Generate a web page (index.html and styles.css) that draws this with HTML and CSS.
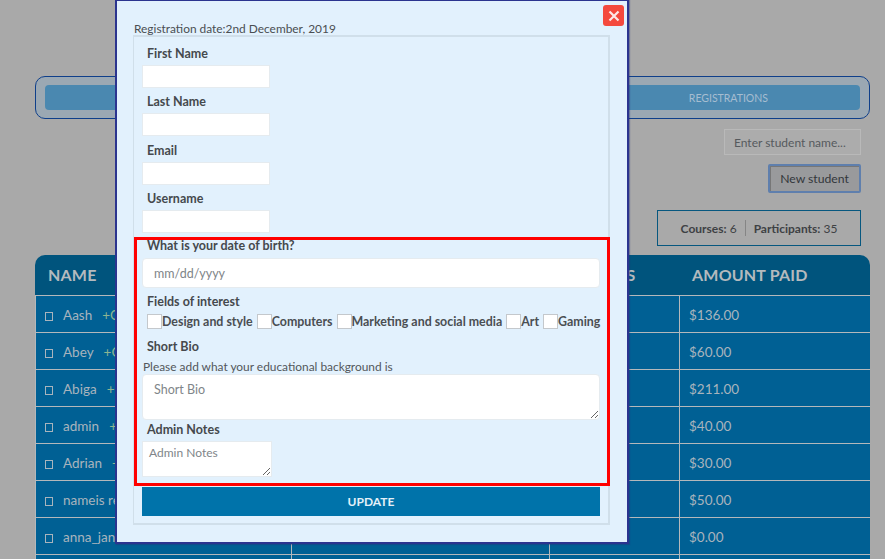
FILE: index.html
```html
<!DOCTYPE html>
<html lang="en">
<head>
<meta charset="utf-8">
<title>Registrations</title>
<link rel="stylesheet" href="styles.css">
</head>
<body>
<main class="page">
  <nav class="nav"><div class="nav-bar"><span class="nav-item">REGISTRATIONS</span></div></nav>
  <div class="tools">
    <input class="search" type="text" placeholder="Enter student name...">
    <button class="new-btn" type="button">New student</button>
    <div class="stats"><span><b>Courses:</b> 6</span><i class="stats-sep"></i><span><b>Participants:</b> 35</span></div>
  </div>
  <table class="grid">
    <thead>
      <tr><th class="c1">NAME</th><th class="c2">EMAIL</th><th class="c3">COURSES</th><th class="c4">AMOUNT PAID</th></tr>
    </thead>
    <tbody>
      <tr><td><span class="box"></span>Aash<span class="add">+Course</span></td><td></td><td></td><td>$136.00</td></tr>
      <tr><td><span class="box"></span>Abey<span class="add">+Course</span></td><td></td><td></td><td>$60.00</td></tr>
      <tr><td><span class="box"></span>Abiga<span class="add">+Course</span></td><td></td><td></td><td>$211.00</td></tr>
      <tr><td><span class="box"></span>admin<span class="add">+Course</span></td><td></td><td></td><td>$40.00</td></tr>
      <tr><td><span class="box"></span>Adrian<span class="add">+Course</span></td><td></td><td></td><td>$30.00</td></tr>
      <tr><td><span class="box"></span>nameis real</td><td></td><td></td><td>$50.00</td></tr>
      <tr><td><span class="box"></span>anna_jane</td><td></td><td></td><td>$0.00</td></tr>
      <tr class="tail"><td></td><td></td><td></td><td></td></tr>
    </tbody>
  </table>
</main>

<section class="modal">
  <button class="close" type="button" aria-label="Close">
    <svg viewBox="0 0 12 12" width="12" height="12"><path d="M1.5 1.5 10.5 10.5M10.5 1.5 1.5 10.5" stroke="#fde9e7" stroke-width="2.2" fill="none"/></svg>
  </button>
  <p class="reg-date">Registration date:2nd December, 2019</p>
  <form class="fieldset">
    <label class="lbl">First Name</label>
    <input class="short" type="text">
    <label class="lbl">Last Name</label>
    <input class="short" type="text">
    <label class="lbl">Email</label>
    <input class="short" type="text">
    <label class="lbl">Username</label>
    <input class="short" type="text">
    <label class="lbl lbl-dob">What is your date of birth?</label>
    <input class="date" type="text" placeholder="mm/dd/yyyy">
    <label class="lbl lbl-fields">Fields of interest</label>
    <div class="checks">
      <span class="check"><i></i>Design and style</span>
      <span class="check"><i></i>Computers</span>
      <span class="check"><i></i>Marketing and social media</span>
      <span class="check"><i></i>Art</span>
      <span class="check"><i></i>Gaming</span>
    </div>
    <label class="lbl lbl-bio">Short Bio</label>
    <p class="help">Please add what your educational background is</p>
    <textarea class="bio" placeholder="Short Bio"></textarea>
    <label class="lbl lbl-notes">Admin Notes</label>
    <textarea class="notes" placeholder="Admin Notes"></textarea>
    <button class="update" type="button">UPDATE</button>
    <div class="highlight"></div>
  </form>
</section>
</body>
</html>
```

FILE: styles.css
```css
* { box-sizing: border-box; }
html, body { margin: 0; height: 559px; overflow: hidden; }
body { background: #a9a9a9; font-family: Lato, "Liberation Sans", sans-serif; font-size: 13px; color: #3f4347; position: relative; }

.page { padding: 76px 15px 0 35px; }

.nav { height: 43px; border: 1px solid #0f3f8a; border-radius: 10px; background: #9ba8b3; padding: 8px 9px; }
.nav-bar { height: 25px; background: #4a88b0; border-radius: 4px; display: flex; justify-content: flex-end; align-items: center; padding-right: 92px; }
.nav-item { font-size: 10.5px; color: #a6bdd0; }

.tools { display: flex; flex-direction: column; align-items: flex-end; padding: 10px 9px 0 0; }
.search { width: 137px; height: 26px; border: 1px solid #b9b9b9; background: #acacac; padding: 0 9px; font: 12px Lato, sans-serif; }
.search::placeholder { color: #565a5e; opacity: 1; }
.new-btn { width: 93px; height: 29px; margin-top: 9px; background: #999a9c; border: 2px solid #5f7fad; border-radius: 2px; font: 12.2px Lato, sans-serif; color: #33373b; box-shadow: inset 1px 1px 0 #777; padding: 0; }
.stats { width: 204px; height: 36px; margin-top: 17px; border: 1px solid #07577f; display: flex; align-items: center; justify-content: center; gap: 8px; font-size: 12px; color: #3e4144; }
.stats b { font-weight: 700; }
.stats-sep { width: 1px; height: 16px; background: #858585; }

.grid { width: 835px; margin-top: 9px; border-collapse: separate; border-spacing: 0; table-layout: fixed; color: #a8b4bd; }
.grid th { height: 40px; background: #00547d; color: #b4babe; text-align: left; font-size: 16px; font-weight: 700; padding: 0 0 2px 13px; letter-spacing: .2px; }
.grid th:first-child { border-top-left-radius: 10px; }
.grid th:last-child { border-top-right-radius: 10px; }
.c1 { width: 256px; }
.c2 { width: 258px; }
.c3 { width: 130px; }
.grid td { height: 37px; background: #006094; border-top: 1px solid #b4b8bb; border-left: 1px solid #b4b8bb; padding: 2px 0 0 9px; font-size: 13.5px; white-space: nowrap; overflow: hidden; }
.grid .tail td { height: 5px; padding: 0; }
.box { display: inline-block; width: 8px; height: 9px; border: 1px solid #a8b4bd; margin-right: 10px; vertical-align: -1px; }
.add { color: #8eb592; margin-left: 10px; }

.modal { position: absolute; left: 115px; top: -1px; width: 514px; height: 545px; background: #e2f1fd; border: 2px solid #2b348f; padding: 21px 18px 0 16px; box-shadow: 1px 1px 1px rgba(40,50,120,.4); }
.close { position: absolute; top: 4px; right: 3px; width: 21px; height: 21px; background: #f4493d; border: 0; border-radius: 3px; padding: 0; display: flex; align-items: center; justify-content: center; }
.reg-date { margin: 0 0 0 1px; height: 13px; line-height: 13px; font-size: 11.9px; color: #4a4e52; }
.fieldset { position: relative; width: 477px; height: 490px; border: 1px solid #d0dfea; border-width: 2px 2px 2px 1px; display: flex; flex-direction: column; align-items: flex-start; padding: 7px 8px 0; }
.lbl { display: block; flex: none; margin-left: 5px; height: 18px; line-height: 20px; font-size: 12.5px; font-weight: 700; color: #45494d; }
.fieldset input, .fieldset textarea { border: 1px solid #e5ebef; background: #fff; display: block; flex: none; font: 13px Lato, sans-serif; margin: 0; }
.fieldset input::placeholder, .fieldset textarea::placeholder { color: #808589; opacity: 1; }
.fieldset .short { width: 128px; height: 23px; margin: 3px 0 4.33px; }
.lbl-dob { margin-top: -1px; }
.fieldset .date { width: 458px; height: 30px; border-radius: 4px; padding: 1px 11px 0; margin-top: 4px; font-size: 12.5px; }
.lbl-fields { margin-top: 4px; }
.checks { display: flex; flex: none; align-items: center; height: 19px; margin: 2px 0 0 5px; gap: 4px; font-size: 12.4px; font-weight: 700; color: #4a4e52; white-space: nowrap; }
.check { display: flex; align-items: center; }
.check i { width: 15px; height: 15px; background: #fff; border: 1px solid #c4c8cc; }
.lbl-bio { margin-top: 6px; }
.help { margin: 4px 0 0 1px; flex: none; height: 15px; line-height: 15px; font-size: 11.9px; color: #53575b; }
.fieldset .bio { width: 458px; height: 46px; border-radius: 4px; padding: 7px 11px; font-size: 12.5px; }
.fieldset .notes { width: 130px; height: 36px; padding: 3px 6px; margin-top: 3px; font-size: 12px; }
.update { width: 458px; height: 29px; margin-top: 9.5px; background: #0073aa; border: 0; color: #e4f0f8; font: 700 12px Lato, sans-serif; flex: none; }
.highlight { position: absolute; left: 0; top: 200px; width: 476px; height: 249px; border: 3px solid #f00; pointer-events: none; }
```
